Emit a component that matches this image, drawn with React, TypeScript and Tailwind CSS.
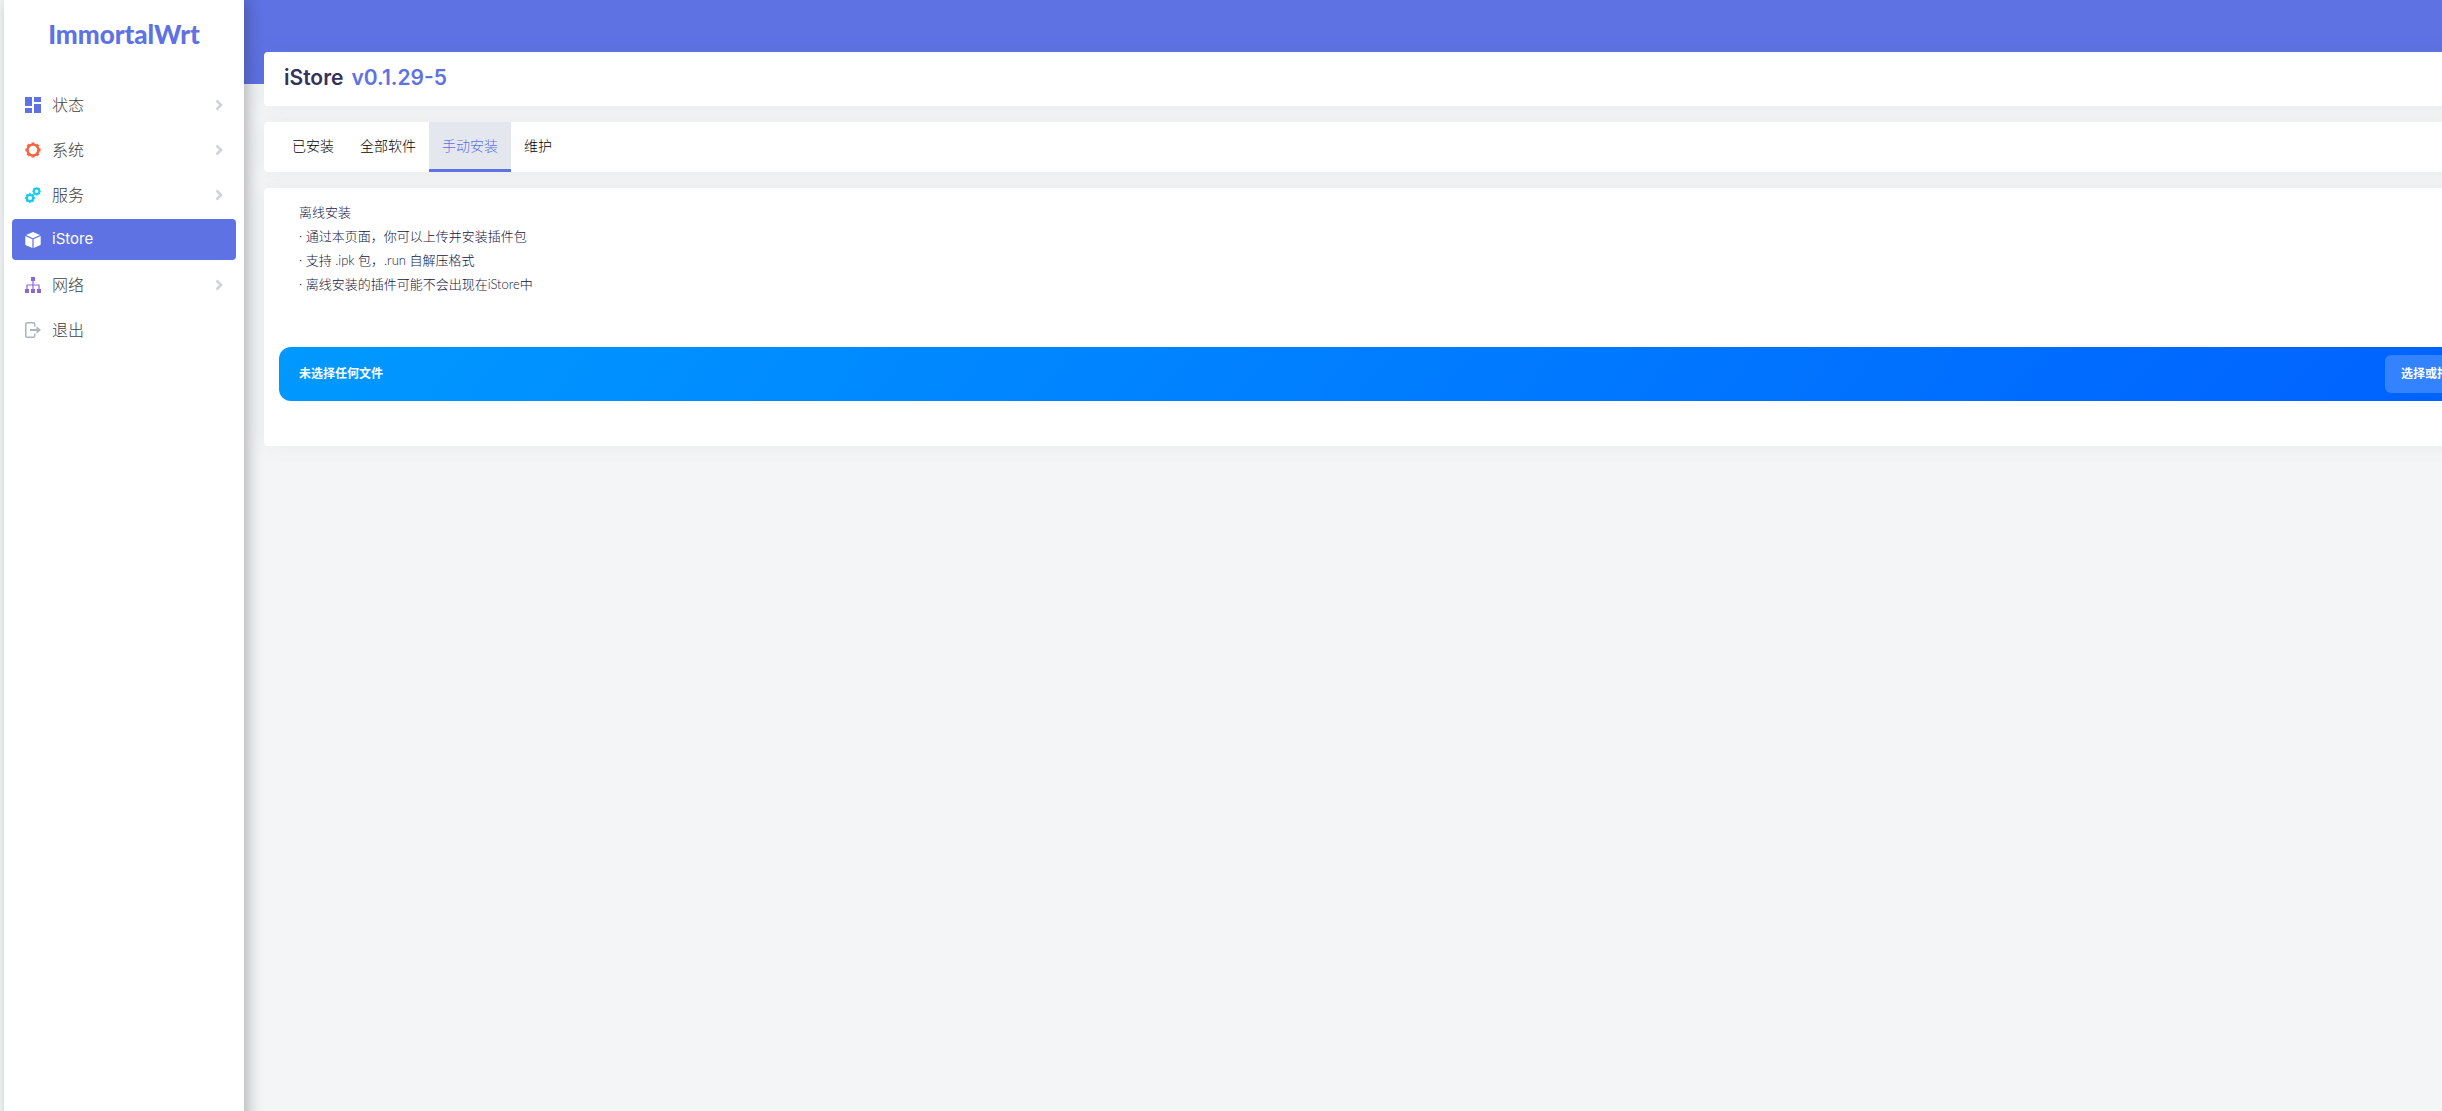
import type { ReactNode } from "react";

const TEETH = [0, 45, 90, 135];

function DashboardIcon() {
  return (
    <svg viewBox="0 0 16 16" className="size-4 text-[#5e72e4]" fill="currentColor" aria-hidden="true">
      <rect x="0" y="0" width="7" height="9" />
      <rect x="0" y="11" width="7" height="5" />
      <rect x="9" y="0" width="7" height="5" />
      <rect x="9" y="7" width="7" height="9" />
    </svg>
  );
}

function Gear({ cx, cy, r, stroke, tooth }: { cx: number; cy: number; r: number; stroke: number; tooth: number }) {
  const reach = r + stroke / 2 + tooth / 2;
  return (
    <g>
      <circle cx={cx} cy={cy} r={r} fill="none" stroke="currentColor" strokeWidth={stroke} />
      {TEETH.map((a) => (
        <path
          key={a}
          transform={`rotate(${a} ${cx} ${cy})`}
          d={`M${cx} ${cy - reach}V${cy - r} M${cx} ${cy + r}V${cy + reach}`}
          stroke="currentColor"
          strokeWidth={tooth * 1.5}
        />
      ))}
    </g>
  );
}

function GearIcon() {
  return (
    <svg viewBox="0 0 16 16" className="size-4 text-[#fb6340]" aria-hidden="true">
      <Gear cx={8} cy={8} r={5.4} stroke={2.4} tooth={2} />
    </svg>
  );
}

function GearsIcon() {
  return (
    <svg viewBox="0 0 16 16" className="size-4 text-[#11cdef]" aria-hidden="true">
      <Gear cx={5} cy={11} r={3.1} stroke={2} tooth={1.5} />
      <Gear cx={11.6} cy={4.3} r={2.6} stroke={1.7} tooth={1.4} />
    </svg>
  );
}

function BoxIcon() {
  return (
    <svg viewBox="0 0 16 16" className="size-4 text-white" fill="currentColor" aria-hidden="true">
      <path d="M8 0 15 3 8 6.200 1 3Z" />
      <path d="M0.300 4 7.400 7.200V16L1 13.300Q.3 13 .3 12.200Z" />
      <path d="M15.700 4 8.600 7.200V16L15 13.300Q15.700 13 15.700 12.200Z" />
    </svg>
  );
}

function NetworkIcon() {
  return (
    <svg viewBox="0 0 16 16" className="size-4 text-[#8965e0]" fill="currentColor" aria-hidden="true">
      <rect x="6" y="0" width="4" height="4" />
      <path d="M2 12V8H14V12M8 4V12" fill="none" stroke="currentColor" strokeWidth="1.200" />
      <rect x="0" y="12" width="4" height="4" />
      <rect x="6" y="12" width="4" height="4" />
      <rect x="12" y="12" width="4" height="4" />
    </svg>
  );
}

function ExitIcon() {
  return (
    <svg viewBox="0 0 16 16" className="size-4 text-[#adb5bd]" fill="none" stroke="currentColor" aria-hidden="true">
      <path d="M9.700 4.500V2Q9.700.8 8.500.8H2Q.8.8.8 2V14Q.8 15.200 2 15.200H8.500Q9.700 15.200 9.700 14V11.500" strokeWidth="1.500" />
      <path d="M5 8H13" strokeWidth="2" />
      <path d="M11.500 4.300 16 8 11.500 11.700Z" fill="currentColor" stroke="none" />
    </svg>
  );
}

function Chevron() {
  return (
    <svg viewBox="0 0 8 12" className="h-3 w-2 text-[#ced4da]" fill="none" stroke="currentColor" strokeWidth="2.600" aria-hidden="true">
      <path d="M1.500 1.500 6 6 1.500 10.500" />
    </svg>
  );
}

type Item = { label: string; icon: ReactNode; expandable?: boolean; active?: boolean };

const items: Item[] = [
  { label: "状态", icon: <DashboardIcon />, expandable: true },
  { label: "系统", icon: <GearIcon />, expandable: true },
  { label: "服务", icon: <GearsIcon />, expandable: true },
  { label: "iStore", icon: <BoxIcon />, active: true },
  { label: "网络", icon: <NetworkIcon />, expandable: true },
  { label: "退出", icon: <ExitIcon /> },
];

function NavItem({ label, icon, expandable, active }: Item) {
  const base = "flex h-[41px] w-full items-center gap-[11px] rounded px-[13px] text-left";
  if (expandable) {
    return (
      <button type="button" aria-expanded={false} className={`${base} text-base text-[#404040]`}>
        {icon}
        <span className="flex-1">{label}</span>
        <Chevron />
      </button>
    );
  }
  return (
    <a href="#" aria-current={active ? "page" : undefined} className={active ? `${base} bg-[#5e72e4] text-[15px] font-normal text-white` : `${base} text-base text-[#404040]`}>
      {icon}
      <span>{label}</span>
    </a>
  );
}

const tabs = ["已安装", "全部软件", "手动安装", "维护"];

const notes = [
  "离线安装",
  "· 通过本页面，你可以上传并安装插件包",
  "· 支持 .ipk 包，.run 自解压格式",
  "· 离线安装的插件可能不会出现在iStore中",
];

export default function App() {
  return (
    <div className="flex min-h-screen overflow-hidden bg-[#f4f5f7] pl-1 font-['Inter','Noto_Sans_CJK_SC',sans-serif] font-light">
      <aside className="z-10 -mb-5 w-60 shrink-0 bg-white shadow-[4px_0_14px_0_rgba(34,34,34,0.3)]">
        <a href="#" className="flex h-[68px] items-center justify-center font-['Lato',sans-serif] text-[26px] font-black text-[#5e72e4]">
          ImmortalWrt
        </a>
        <nav aria-label="Main" className="px-2 pt-4">
          <ul className="flex flex-col gap-1">
            {items.map((item) => (
              <li key={item.label}>
                <NavItem {...item} />
              </li>
            ))}
          </ul>
        </nav>
      </aside>

      <div className="min-w-0 flex-1">
        <div className="h-[84px] bg-[#5e72e4]" />
        <main className="-mt-8 -mr-[106px] ml-5 flex flex-col gap-4">
          <h1 className="flex h-[54px] items-center gap-2 rounded bg-white px-5 pb-0.5 text-[21px] font-semibold text-[#32325d] shadow-[0_0_20px_0_rgba(100,110,120,0.08)]">
            <span>iStore</span>
            <span className="text-[#5e72e4]">v0.1.29-5</span>
          </h1>

          <nav aria-label="iStore" className="flex h-[50px] rounded bg-white px-[15px] shadow-[0_0_20px_0_rgba(100,110,120,0.08)]">
            {tabs.map((tab) =>
              tab === "手动安装" ? (
                <a key={tab} href="#" aria-current="page" className="flex items-center border-b-3 border-[#5e72e4] bg-[#e4e7ee] px-[13px] text-sm text-[#5e72e4]">
                  {tab}
                </a>
              ) : (
                <a key={tab} href="#" className="flex items-center border-b-3 border-transparent px-[13px] text-sm text-black">
                  {tab}
                </a>
              ),
            )}
          </nav>

          <section className="rounded bg-white px-[15px] pt-3 pb-[45px] shadow-[0_0_20px_0_rgba(100,110,120,0.08)]">
            <ul className="px-5 font-['Lato','Noto_Sans_CJK_SC',sans-serif] text-[13px] leading-6 text-[#141440]">
              {notes.map((note) => (
                <li key={note}>{note}</li>
              ))}
            </ul>
            <div className="mt-[51px] flex h-[54px] items-center justify-between rounded-xl bg-[linear-gradient(130deg,#0099ff,#0060ff)] px-5 text-xs font-bold text-white">
              <span>未选择任何文件</span>
              <button type="button" className="h-[38px] rounded-md bg-white/20 px-4">
                选择或拖放安装包
              </button>
            </div>
          </section>
        </main>
      </div>
    </div>
  );
}
